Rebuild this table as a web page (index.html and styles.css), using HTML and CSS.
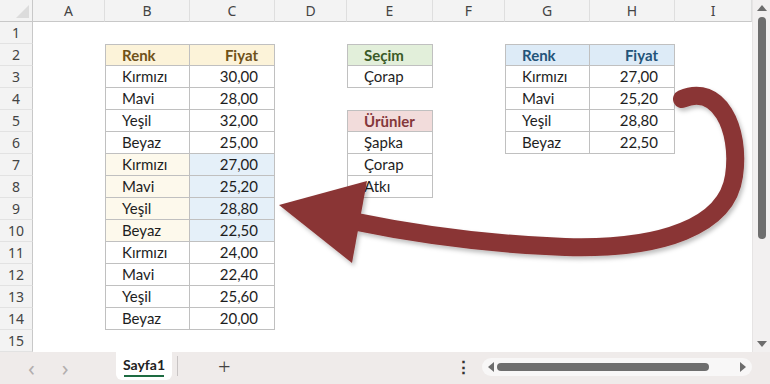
FILE: index.html
```html
<!DOCTYPE html>
<html lang="tr">
<head>
<meta charset="utf-8">
<title>Sayfa1</title>
<link rel="stylesheet" href="styles.css">
</head>
<body>
<div class="app">
  <div class="main">
    <div class="sheet">
      <div class="row hdr">
        <div class="corner"><span class="tri"></span></div>
        <div class="ch">A</div><div class="ch">B</div><div class="ch">C</div><div class="ch">D</div><div class="ch">E</div><div class="ch">F</div><div class="ch">G</div><div class="ch">H</div><div class="ch">I</div>
      </div>
      <div class="row"><div class="rh">1</div><div></div><div></div><div></div><div></div><div></div><div></div><div></div><div></div><div></div></div>
      <div class="row"><div class="rh">2</div><div></div>
        <div class="c bt bl h-gold">Renk</div><div class="c bt r h-gold">Fiyat</div><div></div>
        <div class="c bt bl h-green">Seçim</div><div></div>
        <div class="c bt bl h-blue">Renk</div><div class="c bt r h-blue">Fiyat</div><div></div></div>
      <div class="row"><div class="rh">3</div><div></div>
        <div class="c bl">Kırmızı</div><div class="c r">30,00</div><div></div>
        <div class="c bl">Çorap</div><div></div>
        <div class="c bl">Kırmızı</div><div class="c r">27,00</div><div></div></div>
      <div class="row"><div class="rh">4</div><div></div>
        <div class="c bl">Mavi</div><div class="c r">28,00</div><div></div>
        <div></div><div></div>
        <div class="c bl">Mavi</div><div class="c r">25,20</div><div></div></div>
      <div class="row"><div class="rh">5</div><div></div>
        <div class="c bl">Yeşil</div><div class="c r">32,00</div><div></div>
        <div class="c bt bl h-red">Ürünler</div><div></div>
        <div class="c bl">Yeşil</div><div class="c r">28,80</div><div></div></div>
      <div class="row"><div class="rh">6</div><div></div>
        <div class="c bl">Beyaz</div><div class="c r">25,00</div><div></div>
        <div class="c bl">Şapka</div><div></div>
        <div class="c bl">Beyaz</div><div class="c r">22,50</div><div></div></div>
      <div class="row"><div class="rh">7</div><div></div>
        <div class="c bl f-cream">Kırmızı</div><div class="c r f-blue">27,00</div><div></div>
        <div class="c bl">Çorap</div><div></div><div></div><div></div><div></div></div>
      <div class="row"><div class="rh">8</div><div></div>
        <div class="c bl f-cream">Mavi</div><div class="c r f-blue">25,20</div><div></div>
        <div class="c bl">Atkı</div><div></div><div></div><div></div><div></div></div>
      <div class="row"><div class="rh">9</div><div></div>
        <div class="c bl f-cream">Yeşil</div><div class="c r f-blue">28,80</div><div></div><div></div><div></div><div></div><div></div><div></div></div>
      <div class="row"><div class="rh">10</div><div></div>
        <div class="c bl f-cream">Beyaz</div><div class="c r f-blue">22,50</div><div></div><div></div><div></div><div></div><div></div><div></div></div>
      <div class="row"><div class="rh">11</div><div></div>
        <div class="c bl">Kırmızı</div><div class="c r">24,00</div><div></div><div></div><div></div><div></div><div></div><div></div></div>
      <div class="row"><div class="rh">12</div><div></div>
        <div class="c bl">Mavi</div><div class="c r">22,40</div><div></div><div></div><div></div><div></div><div></div><div></div></div>
      <div class="row"><div class="rh">13</div><div></div>
        <div class="c bl">Yeşil</div><div class="c r">25,60</div><div></div><div></div><div></div><div></div><div></div><div></div></div>
      <div class="row"><div class="rh">14</div><div></div>
        <div class="c bl">Beyaz</div><div class="c r">20,00</div><div></div><div></div><div></div><div></div><div></div><div></div></div>
      <div class="row"><div class="rh">15</div><div></div><div></div><div></div><div></div><div></div><div></div><div></div><div></div><div></div></div>
    </div>
    <div class="vscroll">
      <span class="tri-up"></span>
      <span class="vthumb"></span>
      <span class="tri-down"></span>
    </div>
  </div>
  <div class="bottombar">
    <div class="navs"><span class="nav">&#x2039;</span><span class="nav">&#x203A;</span></div>
    <div class="tab">Sayfa1</div>
    <div class="sep"></div>
    <div class="plus">+</div>
    <div class="spacer"></div>
    <div class="dots">&#x22EE;</div>
    <div class="hscroll">
      <span class="tri-left"></span>
      <span class="hthumb"></span>
      <span class="tri-right"></span>
    </div>
  </div>
  <svg class="arrow" width="770" height="384" viewBox="0 0 770 384">
    <defs>
      <filter id="sh" x="-10%" y="-10%" width="130%" height="130%">
        <feDropShadow dx="2" dy="3" stdDeviation="2" flood-color="#000" flood-opacity="0.25"/>
      </filter>
    </defs>
    <g filter="url(#sh)" fill="#8a3535" stroke="#8a3535">
      <path d="M682 99 C718 83 741 128 734 176 C727 226 662 250 565 247 C480 244 410 233 352 221" fill="none" stroke-width="18" stroke-linecap="round"/>
      <polygon points="279,205 367,181 352,263" stroke="none"/>
    </g>
  </svg>
</div>
</body>
</html>
```
FILE: styles.css
```css
* { box-sizing: border-box; }
html, body { margin: 0; padding: 0; }
body {
  width: 770px;
  height: 384px;
  overflow: hidden;
  background: #fff;
  font-family: Lato, "Open Sans", sans-serif;
}
.app {
  position: relative;
  width: 770px;
  height: 384px;
  display: flex;
  flex-direction: column;
}
.main {
  display: flex;
  height: 352px;
}
.sheet {
  width: 752px;
  display: flex;
  flex-direction: column;
}
.row {
  display: grid;
  grid-template-columns: 33px 72px 85px 85px 72px 86px 72px 85px 85px 77px;
  height: 22px;
}
.row > div {
  height: 22px;
  line-height: 21px;
  font-size: 15px;
  color: #1e1e1e;
  white-space: nowrap;
  overflow: hidden;
}
.hdr > div {
  background: #f3f3f3;
  border-bottom: 1px solid #c8c8c8;
  border-right: 1px solid #dedede;
  font-family: "Noto Sans", sans-serif;
  font-size: 14px;
  color: #444;
  text-align: center;
  line-height: 21px;
}
.hdr .corner {
  position: relative;
  border-right: 1px solid #c8c8c8;
}
.tri {
  position: absolute;
  right: 3px;
  bottom: 3px;
  width: 0;
  height: 0;
  border-left: 13px solid transparent;
  border-bottom: 13px solid #dcdcdc;
}
.row > .rh {
  background: #f3f3f3;
  border-right: 1px solid #c8c8c8;
  border-bottom: 1px solid #e2e2e2;
  font-family: "Noto Sans", sans-serif;
  font-size: 14px;
  color: #444;
  text-align: center;
}
.row > .c {
  padding: 0 16px;
  border-right: 1px solid #c0c0c0;
  border-bottom: 1px solid #c0c0c0;
}
.row > .bt { border-top: 1px solid #c0c0c0; line-height: 20px; }
.row > .bl { border-left: 1px solid #c0c0c0; }
.row > .r { text-align: right; }
.row > .h-gold { background: #fcf3d9; color: #6f5219; font-weight: 700; }
.row > .h-green { background: #e2efda; color: #3a5a27; font-weight: 700; }
.row > .h-red { background: #f2dcdb; color: #84373a; font-weight: 700; }
.row > .h-blue { background: #ddebf7; color: #235479; font-weight: 700; }
.row > .f-cream { background: #fdf9ec; }
.row > .f-blue { background: #e5f0f9; }

.vscroll {
  width: 18px;
  height: 352px;
  background: #f2f0f0;
  border-left: 1px solid #e6e4e4;
  position: relative;
  display: flex;
  flex-direction: column;
  align-items: center;
}
.tri-up {
  margin-top: 5px;
  width: 0; height: 0;
  border-left: 5px solid transparent;
  border-right: 5px solid transparent;
  border-bottom: 6px solid #6d6d6d;
}
.vthumb {
  margin-top: 6px;
  width: 8px;
  height: 222px;
  border-radius: 4px;
  background: #6e6e6e;
}
.tri-down {
  margin-top: auto;
  margin-bottom: 5px;
  width: 0; height: 0;
  border-left: 5px solid transparent;
  border-right: 5px solid transparent;
  border-top: 6px solid #6d6d6d;
}

.bottombar {
  height: 32px;
  background: #efebea;
  display: flex;
  align-items: flex-start;
  font-family: "Noto Sans", sans-serif;
}
.navs {
  width: 116px;
  display: flex;
  gap: 27px;
  padding-left: 28px;
  padding-top: 1px;
}
.nav {
  font-size: 22px;
  line-height: 28px;
  color: #b2aeae;
}
.tab {
  width: 56px;
  height: 28px;
  background: #fff;
  border-radius: 0 0 6px 6px;
  font-family: Lato, sans-serif;
  font-weight: 700;
  font-size: 14px;
  color: #222;
  text-align: center;
  line-height: 26px;
  position: relative;
}
.tab::after {
  content: "";
  position: absolute;
  left: 8px;
  right: 8px;
  bottom: 3px;
  height: 2px;
  background: #1d6b41;
}
.sep {
  width: 1px;
  height: 20px;
  margin: 4px 0 0 5px;
  background: #c8c4c4;
}
.plus {
  margin-left: 40px;
  font-size: 22px;
  font-weight: 300;
  line-height: 28px;
  color: #444;
}
.spacer { flex: 1; }
.dots {
  font-size: 17px;
  font-weight: 700;
  line-height: 30px;
  color: #333;
  margin-right: 10px;
}
.hscroll {
  width: 270px;
  height: 18px;
  margin-top: 6px;
  margin-right: 18px;
  background: #f8f7f7;
  border-radius: 9px;
  display: flex;
  align-items: center;
  padding: 0 6px;
}
.tri-left {
  width: 0; height: 0;
  border-top: 5px solid transparent;
  border-bottom: 5px solid transparent;
  border-right: 6px solid #6d6d6d;
}
.hthumb {
  margin-left: 3px;
  width: 212px;
  height: 8px;
  border-radius: 4px;
  background: #6e6e6e;
}
.tri-right {
  margin-left: auto;
  width: 0; height: 0;
  border-top: 5px solid transparent;
  border-bottom: 5px solid transparent;
  border-left: 6px solid #6d6d6d;
}
.arrow {
  position: absolute;
  left: 0;
  top: 0;
  pointer-events: none;
}
```
